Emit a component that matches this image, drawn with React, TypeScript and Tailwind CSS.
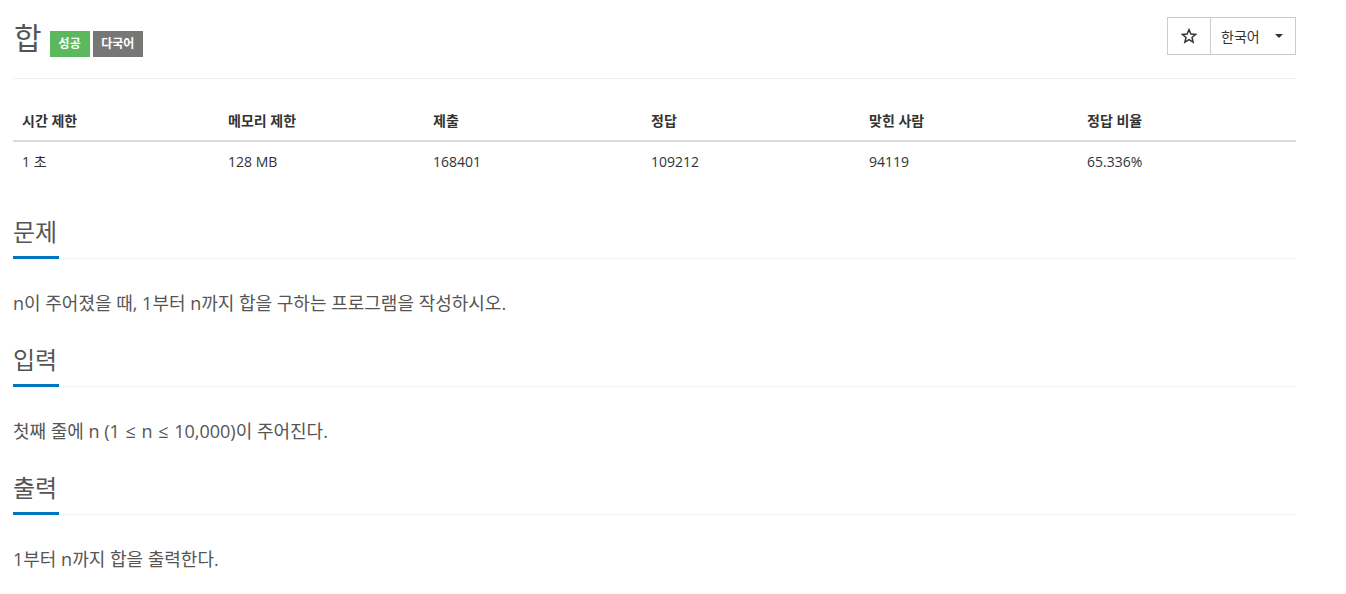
import React from "react";

const font = { fontFamily: '"Open Sans", "Noto Sans CJK KR", sans-serif' };

function Section({ title, children }: { title: string; children: React.ReactNode }) {
  return (
    <section>
      <div className="border-b border-dotted border-[#e5e5e5] flex">
        <h2 className="w-[46px] text-[24px] leading-[34px] text-[#555] font-normal border-b-[3px] border-[#0076c0] mb-[-1px] pb-[7px] whitespace-nowrap">
          {title}
        </h2>
      </div>
      <p className="text-[18px] text-[#555] mt-[31px] mb-[27px] leading-[26px]">{children}</p>
    </section>
  );
}

export default function App() {
  const heads = ["시간 제한", "메모리 제한", "제출", "정답", "맞힌 사람", "정답 비율"];
  const vals = ["1 초", "128 MB", "168401", "109212", "94119", "65.336%"];
  return (
    <div className="bg-white min-h-[594px] w-[1346px]" style={font}>
      <div className="ml-[13px] w-[1283px]">
        <div className="flex items-start justify-between pt-[17px] pb-[21px] border-b border-[#eee]">
          <div className="flex items-start gap-[8px]">
            <h1 className="text-[30px] leading-[38px] text-[#555] font-normal pl-[1px] mt-[2px]">합</h1>
            <div className="flex gap-[3px] mt-[14px]">
              <span className="bg-[#5cb85c] text-white text-[12px] font-bold h-[26px] px-[9px] flex items-center">성공</span>
              <span className="bg-[#777] text-white text-[12px] font-bold h-[26px] px-[8.5px] flex items-center">다국어</span>
            </div>
          </div>
          <div className="flex border border-[#ccc] h-[38px]">
            <div className="w-[43px] border-r border-[#ccc] flex items-center justify-center text-[#333]">
              <svg width="16" height="16" viewBox="0 0 24 24" fill="none" stroke="#333" strokeWidth="2.2" strokeLinejoin="miter">
                <polygon points="12,2.5 14.9,9.1 22,9.6 16.5,14.2 18.2,21.2 12,17.4 5.8,21.2 7.5,14.2 2,9.6 9.1,9.1" />
              </svg>
            </div>
            <div className="w-[84px] flex items-center pl-[10px] text-[14px] text-[#333]">
              <span>한국어</span>
              <span className="ml-[15px] w-0 h-0 border-l-[4px] border-r-[4px] border-t-[4px] border-l-transparent border-r-transparent border-t-[#333]" />
            </div>
          </div>
        </div>

        <div className="mt-[22px] grid grid-cols-[206px_205px_218px_218px_218px_1fr] text-[14px] text-[#333]">
          {heads.map((h) => (
            <div key={h} className="font-bold px-[9px] h-[41px] flex items-center border-b-2 border-[#ddd]">{h}</div>
          ))}
          {vals.map((v) => (
            <div key={v} className="px-[9px] h-[38px] flex items-center">{v}</div>
          ))}
        </div>

        <div className="mt-[35px]">
          <Section title="문제">n이 주어졌을 때, 1부터 n까지 합을 구하는 프로그램을 작성하시오.</Section>
          <Section title="입력">
            첫째 줄에 n (1 <span className="inline-block mx-[1px]">≤</span> n <span className="inline-block mx-[1px]">≤</span> 10,000)이 주어진다.
          </Section>
          <Section title="출력">1부터 n까지 합을 출력한다.</Section>
        </div>
      </div>
    </div>
  );
}
